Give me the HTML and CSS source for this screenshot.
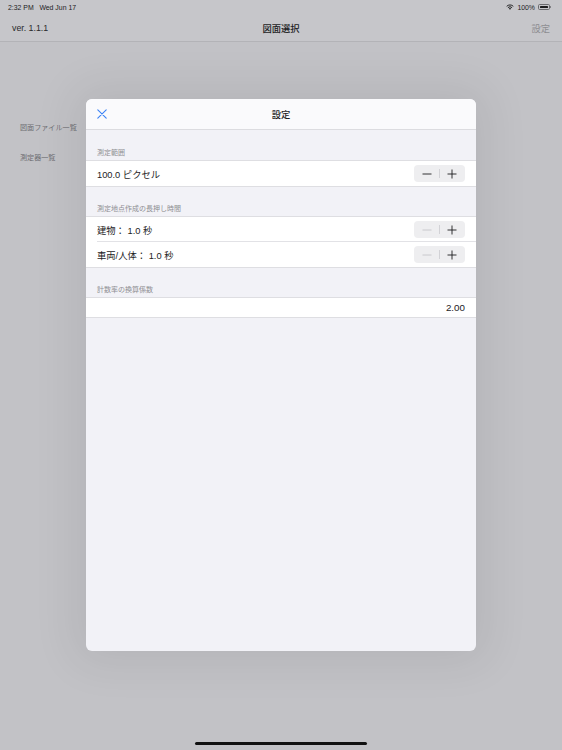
FILE: index.html
```html
<!DOCTYPE html>
<html lang="ja">
<head>
  <meta charset="UTF-8">
  <title>図面選択</title>
  <link rel="stylesheet" href="styles.css">
</head>
<body>
  <div class="screen">
    <div class="statusbar">
      <div class="status-time">2:32 PM&nbsp;&nbsp;&nbsp;Wed Jun 17</div>
      <div class="status-right">
        <svg class="wifi" width="8" height="6" viewBox="0 0 16 12">
          <path d="M8 11.5 L5.6 9 A3.4 3.4 0 0 1 10.4 9 Z" fill="#1c1c1e"/>
          <path d="M3.9 7.3 A5.8 5.8 0 0 1 12.1 7.3" stroke="#1c1c1e" stroke-width="1.9" fill="none"/>
          <path d="M1.4 4.6 A9.4 9.4 0 0 1 14.6 4.6" stroke="#1c1c1e" stroke-width="1.9" fill="none"/>
        </svg>
        <span>100%</span>
        <span class="battery"><span class="battery-level"></span></span>
      </div>
    </div>

    <div class="navbar">
      <span class="nav-left">ver. 1.1.1</span>
      <span class="nav-title">図面選択</span>
      <span class="nav-right">設定</span>
    </div>

    <ul class="menu">
      <li>図面ファイル一覧</li>
      <li>測定器一覧</li>
    </ul>

    <div class="modal">
      <div class="modal-header">
        <svg class="close" width="10" height="10" viewBox="0 0 10 10">
          <path d="M0.8 0.8 L9.2 9.2 M9.2 0.8 L0.8 9.2" stroke="#3a82f6" stroke-width="1.1" stroke-linecap="round"/>
        </svg>
        <span class="modal-title">設定</span>
      </div>

      <div class="modal-body">
        <div class="section-title first">測定範囲</div>
        <div class="group">
          <div class="row">
            <span>100.0 ピクセル</span>
            <div class="stepper">
              <span class="step"><svg width="10" height="10" viewBox="0 0 10 10"><path d="M0.5 5 H9.5" stroke="#1c1c1e" stroke-width="0.9"/></svg></span>
              <span class="step"><svg width="10" height="10" viewBox="0 0 10 10"><path d="M0.5 5 H9.5 M5 0.5 V9.5" stroke="#1c1c1e" stroke-width="0.9"/></svg></span>
            </div>
          </div>
        </div>

        <div class="section-title">測定地点作成の長押し時間</div>
        <div class="group">
          <div class="row inset">
            <span>建物：&nbsp;1.0 秒</span>
            <div class="stepper">
              <span class="step"><svg width="10" height="10" viewBox="0 0 10 10"><path d="M0.5 5 H9.5" stroke="#c4c4c8" stroke-width="0.9"/></svg></span>
              <span class="step"><svg width="10" height="10" viewBox="0 0 10 10"><path d="M0.5 5 H9.5 M5 0.5 V9.5" stroke="#1c1c1e" stroke-width="0.9"/></svg></span>
            </div>
          </div>
          <div class="row">
            <span>車両/人体：&nbsp;1.0 秒</span>
            <div class="stepper">
              <span class="step"><svg width="10" height="10" viewBox="0 0 10 10"><path d="M0.5 5 H9.5" stroke="#c4c4c8" stroke-width="0.9"/></svg></span>
              <span class="step"><svg width="10" height="10" viewBox="0 0 10 10"><path d="M0.5 5 H9.5 M5 0.5 V9.5" stroke="#1c1c1e" stroke-width="0.9"/></svg></span>
            </div>
          </div>
        </div>

        <div class="section-title">計数率の換算係数</div>
        <div class="group">
          <div class="row field">
            <span class="value">2.00</span>
          </div>
        </div>
      </div>
    </div>

    <div class="home-indicator"></div>
  </div>
</body>
</html>
```

FILE: styles.css
```css
html, body {
  margin: 0;
  padding: 0;
}

body {
  font-family: 'Liberation Sans', 'Noto Sans CJK JP', sans-serif;
  color: #1c1c1e;
}

.screen {
  position: relative;
  width: 562px;
  height: 750px;
  overflow: hidden;
  background: #c2c2c6;
}

.statusbar {
  height: 14px;
  display: flex;
  align-items: center;
  justify-content: space-between;
  padding: 0 10px 0 8px;
  font-size: 6.9px;
  color: #1c1c1e;
  background: #c6c6ca;
}

.status-right {
  display: flex;
  align-items: center;
  gap: 3px;
}

.battery {
  position: relative;
  width: 12px;
  height: 5.5px;
  border: 0.8px solid #6a6a6e;
  border-radius: 1.6px;
  padding: 0.8px;
  box-sizing: border-box;
  display: flex;
  margin-right: 2px;
}

.battery::after {
  content: '';
  position: absolute;
  right: -2.2px;
  top: 1.2px;
  width: 1.2px;
  height: 1.8px;
  background: #6a6a6e;
  border-radius: 0 1px 1px 0;
}

.battery-level {
  flex: 1;
  background: #1c1c1e;
  border-radius: 0.6px;
}

.navbar {
  height: 27px;
  display: grid;
  grid-template-columns: 1fr auto 1fr;
  align-items: center;
  padding: 0 12px 0 12px;
  background: #c6c6ca;
  border-bottom: 1px solid #b3b3b7;
  font-size: 9.3px;
}

.nav-left {
  font-size: 8.8px;
  color: #2a2a2c;
}

.nav-title {
  font-weight: 500;
  color: #1c1c1e;
}

.nav-right {
  justify-self: end;
  color: #8e8e92;
}

.menu {
  list-style: none;
  margin: 0;
  padding: 71px 0 0 20px;
  font-size: 7.1px;
  color: #6d6d72;
}

.menu li {
  height: 30px;
  line-height: 30px;
}

.modal {
  position: absolute;
  left: 86px;
  top: 99px;
  width: 390px;
  height: 552px;
  border-radius: 6px;
  overflow: hidden;
  background: #f2f2f7;
  box-shadow: 0 0 45px 12px rgba(0, 0, 0, 0.07);
}

.modal-header {
  position: relative;
  height: 30px;
  display: flex;
  align-items: center;
  justify-content: center;
  background: #fafafc;
  border-bottom: 1px solid #dcdce0;
}

.close {
  position: absolute;
  left: 11px;
  top: 10px;
}

.modal-title {
  font-size: 9.3px;
  font-weight: 500;
}

.section-title {
  height: 29px;
  box-sizing: border-box;
  display: flex;
  align-items: flex-end;
  padding: 0 0 3px 11px;
  font-size: 7px;
  line-height: 9px;
  color: #8e8e92;
}

.section-title.first {
  height: 30px;
}

.group {
  background: #fff;
  border-top: 1px solid #dedee2;
  border-bottom: 1px solid #dedee2;
}

.row {
  height: 25px;
  box-sizing: border-box;
  display: flex;
  align-items: center;
  justify-content: space-between;
  padding: 0 11px;
  font-size: 9.3px;
}

.row.inset {
  position: relative;
}

.row.inset::after {
  content: '';
  position: absolute;
  left: 11px;
  right: 0;
  bottom: 0;
  height: 1px;
  background: #e2e2e6;
}

.row.field {
  height: 19px;
  justify-content: flex-end;
  font-size: 9.8px;
}

.stepper {
  position: relative;
  display: flex;
  width: 51px;
  height: 17px;
  border-radius: 4px;
  background: #eeeef0;
}

.stepper::after {
  content: '';
  position: absolute;
  left: 25px;
  top: 4px;
  width: 1px;
  height: 9px;
  background: #d2d2d6;
}

.step {
  flex: 1;
  display: flex;
  align-items: center;
  justify-content: center;
}

.home-indicator {
  position: absolute;
  left: 195px;
  bottom: 5px;
  width: 172px;
  height: 3px;
  border-radius: 2px;
  background: #111;
}
```
